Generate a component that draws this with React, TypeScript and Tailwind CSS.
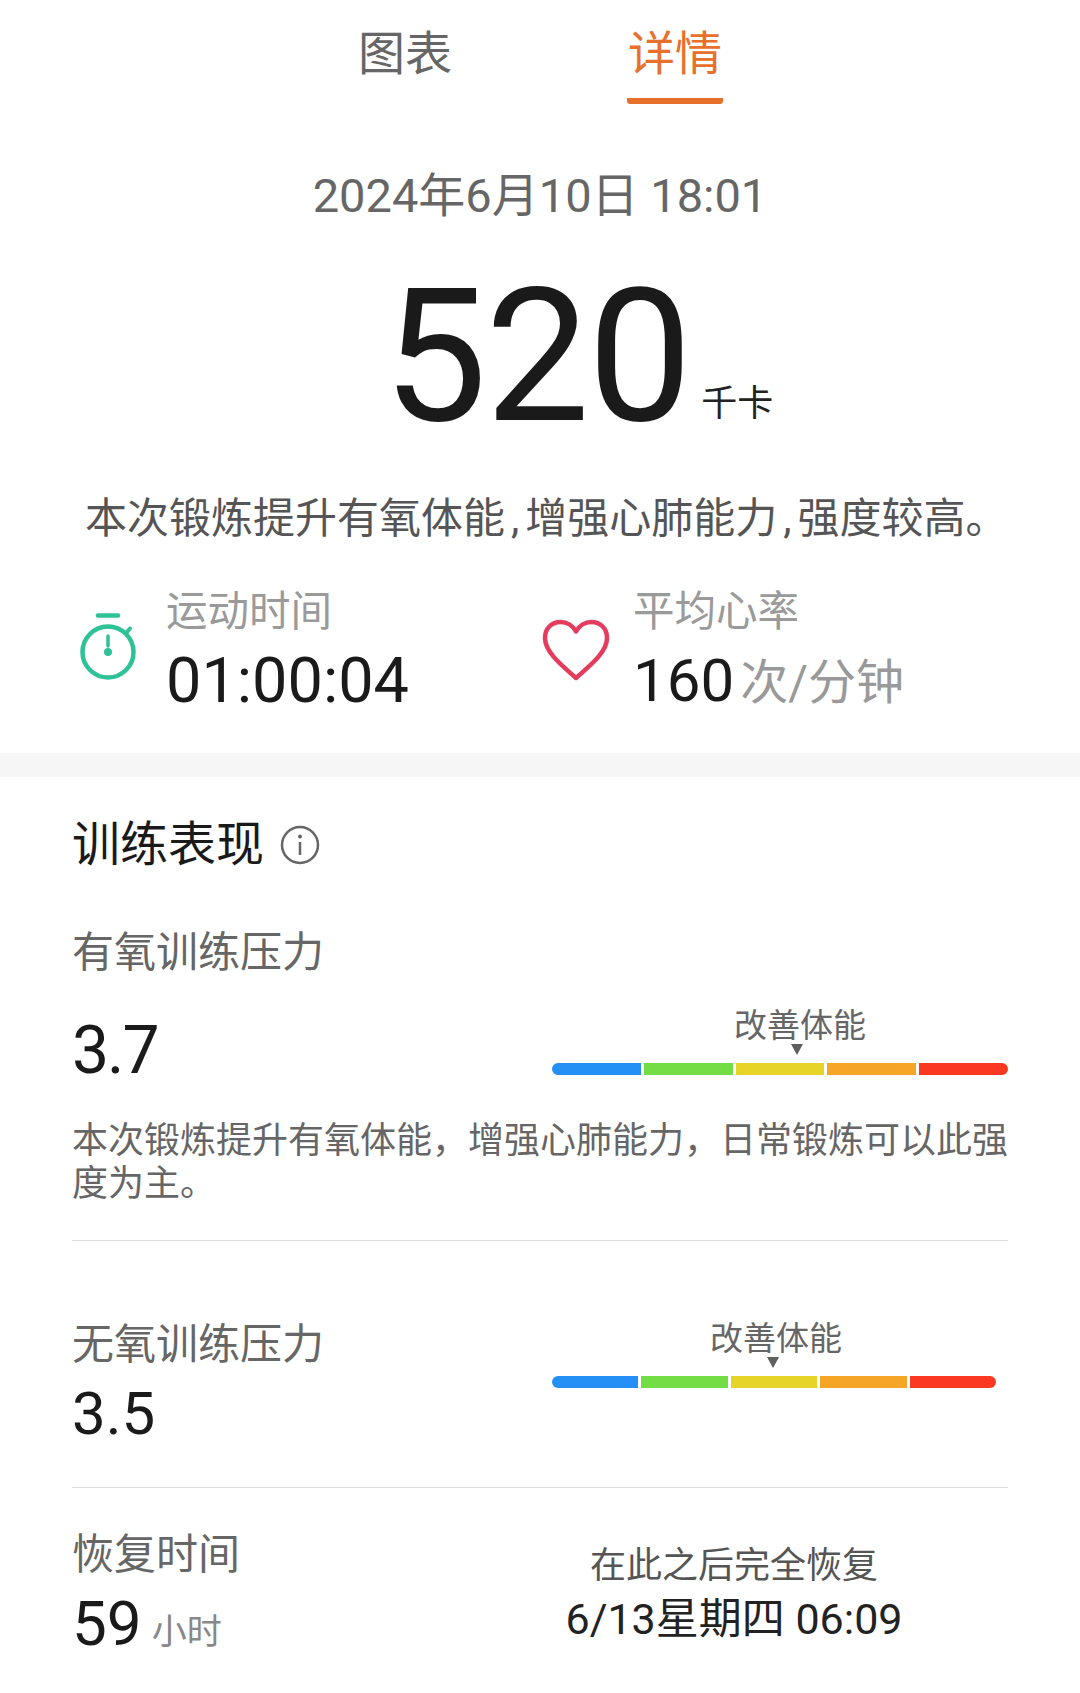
const cjk = "font-['Roboto','Noto_Sans_CJK_SC',sans-serif]";

function StopwatchIcon() {
    return (
        <svg width="60" height="72" viewBox="0 0 60 72" fill="none" stroke="#2fc197" strokeLinecap="round">
            <path d="M20 3.5H40" strokeWidth="4.5" />
            <circle cx="30" cy="40" r="25.5" strokeWidth="4.5" />
            <path d="M52 16.500l-3 3.500" strokeWidth="4" />
            <path d="M30 24V34" strokeWidth="3.500" />
            <circle cx="30" cy="40" r="4" fill="#2fc197" stroke="none" />
        </svg>
    );
}

function HeartIcon() {
    return (
        <svg width="68" height="62" viewBox="0 0 68 62" fill="none" stroke="#e53c5e" strokeWidth="4.5" strokeLinejoin="round">
            <path d="M34 59C22 48 3 34 3 19C3 9 10 3 18.500 3C25 3 31 7 34 12.500C37 7 43 3 49.500 3C58 3 65 9 65 19C65 34 46 48 34 59Z" />
        </svg>
    );
}

function ScaleBar({ width, markerLeft, labelLeft }: { width: string; markerLeft: string; labelLeft: string }) {
    const colors = ["bg-[#2490f5] rounded-l-full", "bg-[#74dc44]", "bg-[#e6d528]", "bg-[#f5a627]", "bg-[#fb3822] rounded-r-full"];
    return (
        <div className={`relative h-[71px] ${width}`}>
            <span className={`absolute top-0 text-[33px] leading-[44px] text-[#666666] ${labelLeft}`}>改善体能</span>
            <span className={`absolute top-[40px] w-0 h-0 border-x-[6px] border-x-transparent border-t-[11px] border-t-[#5f5f5f] ${markerLeft}`} />
            <div className="absolute bottom-0 left-0 right-0 flex gap-[3px]">
                {colors.map((c) => (
                    <div key={c} className={`h-[12px] flex-1 ${c}`} />
                ))}
            </div>
        </div>
    );
}

export default function App() {
    return (
        <div className={`w-[1080px] h-[1693px] overflow-hidden bg-white ${cjk}`}>
            {/* 상단 탭 */}
            <div className="flex justify-center gap-[174px] h-[104px]">
                <div className="pt-[24px] text-[47px] leading-[60px] text-[#666666] w-[96px] text-center">图表</div>
                <div className="pt-[24px] text-[47px] leading-[60px] text-[#e7702c] w-[96px] text-center border-b-[6px] border-[#e7702c] rounded-b-[3px]">详情</div>
            </div>

            <div className="mt-[57px] text-center text-[47px] leading-[70px] text-[#666666]">2024年6月10日 18:01</div>

            <div className="mt-[30px] flex items-end justify-center pl-[76px] h-[190px]">
                <span className="text-[186px] leading-[190px] tracking-[-2px] text-[#1a1a1a]">520</span>
                <span className="ml-[11px] mb-[25px] text-[36px] leading-[44px] text-[#222222]">千卡</span>
            </div>

            <div className="mt-[38px] pl-[85px] text-[42px] leading-[60px] whitespace-nowrap text-[#555555]">
                本次锻炼提升有氧体能<span className="px-[6px]">,</span>增强心肺能力<span className="px-[6px]">,</span>强度较高。
            </div>

            <div className="mt-[37px] flex h-[125px]">
                <div className="flex w-[540px] pl-[78px]">
                    <div className="mt-[26px] w-[60px]"><StopwatchIcon /></div>
                    <div className="ml-[28px]">
                        <div className="text-[41.5px] leading-[52px] text-[#9a9a9a]">运动时间</div>
                        <div className="mt-[7px] text-[63px] leading-[72px] text-[#1a1a1a]">01:00:04</div>
                    </div>
                </div>
                <div className="flex pl-[2px]">
                    <div className="mt-[33px] w-[68px]"><HeartIcon /></div>
                    <div className="ml-[23px]">
                        <div className="text-[41.5px] leading-[52px] text-[#9a9a9a]">平均心率</div>
                        <div className="mt-[7px] flex items-end">
                            <span className="text-[60px] leading-[72px] text-[#1a1a1a]">160</span>
                            <span className="ml-[6px] text-[48px] leading-[68px] text-[#999999]">次/分钟</span>
                        </div>
                    </div>
                </div>
            </div>

            <div className="mt-[42px] h-[24px] bg-[#f6f6f6]" />

            <div className="px-[72px]">
                <div className="mt-[36px] flex items-center h-[64px]">
                    <span className="text-[48px] leading-[64px] text-[#1a1a1a]">训练表现</span>
                    <svg className="ml-[16px]" width="40" height="40" viewBox="0 0 40 40" fill="none" stroke="#666666">
                        <circle cx="20" cy="20" r="18" strokeWidth="2.500" />
                        <path d="M20 17V30" strokeWidth="2.500" />
                        <circle cx="20" cy="11.500" r="2" fill="#666666" stroke="none" />
                    </svg>
                </div>

                <div className="mt-[46px] text-[42px] leading-[60px] text-[#666666]">有氧训练压力</div>
                <div className="mt-[21px] flex justify-between">
                    <div className="mt-[7px] text-[66px] leading-[80px] tracking-[-2px] text-[#1a1a1a]">3.7</div>
                    <ScaleBar width="w-[456px]" labelLeft="left-[182px]" markerLeft="left-[239px]" />
                </div>
                <p className="mt-[29px] text-[36px] leading-[43px] text-[#666666]">本次锻炼提升有氧体能，增强心肺能力，日常锻炼可以此强度为主。</p>

                <div className="mt-[34px] border-t border-[#dddddd]" />

                <div className="mt-[74px] flex justify-between">
                    <div>
                        <div className="text-[42px] leading-[60px] text-[#666666]">无氧训练压力</div>
                        <div className="mt-[3px] text-[60px] leading-[72px] text-[#1a1a1a]">3.5</div>
                    </div>
                    <div className="mt-[2px]">
                        <ScaleBar width="w-[444px] mr-[12px]" labelLeft="left-[158px]" markerLeft="left-[215px]" />
                    </div>
                </div>

                <div className="mt-[37px] border-t border-[#dddddd]" />

                <div className="mt-[40px] flex">
                    <div className="w-[476px]">
                        <div className="text-[42px] leading-[54px] text-[#666666]">恢复时间</div>
                        <div className="mt-[6px] flex items-end">
                            <span className="text-[62px] leading-[72px] text-[#1a1a1a]">59</span>
                            <span className="ml-[10px] mb-[2px] text-[35px] leading-[50px] text-[#888888]">小时</span>
                        </div>
                    </div>
                    <div className="w-[372px] text-center">
                        <div className="mt-[14px] text-[36px] leading-[48px] text-[#555555]">在此之后完全恢复</div>
                        <div className="mt-[1px] text-[43px] leading-[56px] text-[#222222] whitespace-nowrap">6/13星期四 06:09</div>
                    </div>
                </div>
            </div>
        </div>
    );
}
